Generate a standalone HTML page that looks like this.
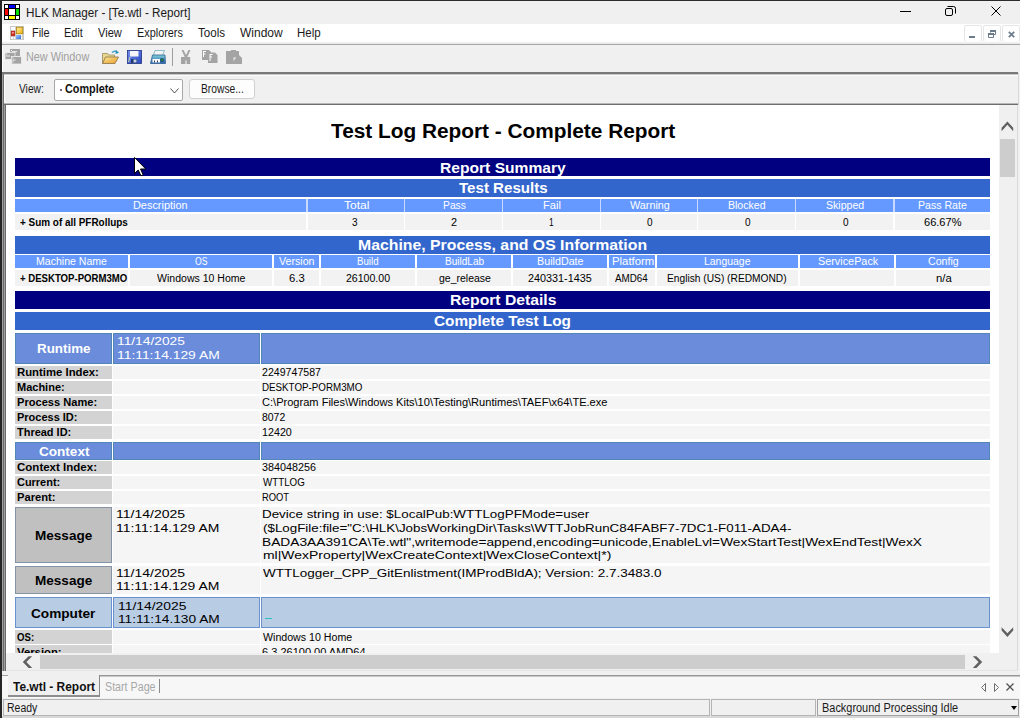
<!DOCTYPE html><html><head><meta charset="utf-8"><style>
*{margin:0;padding:0;box-sizing:border-box}
html,body{width:1020px;height:718px;overflow:hidden;background:#f0f0f0;font-family:"Liberation Sans",sans-serif;position:relative}
.a{position:absolute}
.t{position:absolute;white-space:nowrap;transform-origin:0 0;line-height:1}
</style></head><body>
<div class="a" style="left:0px;top:0px;width:1020px;height:1px;background:#2b2b2b"></div>
<div class="a" style="left:0px;top:1px;width:1020px;height:23px;background:#f0f0f0"></div>
<svg class="a" style="left:4px;top:4px" width="16" height="16" viewBox="0 0 16 16">
<rect x="0" y="0" width="16" height="16" fill="#000"/>
<rect x="1" y="1" width="3" height="3" fill="#fff"/><rect x="5" y="1" width="6" height="3" fill="#0000ff"/><rect x="12" y="1" width="3" height="3" fill="#fff"/>
<rect x="1" y="5" width="3" height="6" fill="#ff0000"/><rect x="5" y="5" width="6" height="6" fill="#fff"/><rect x="12" y="5" width="3" height="6" fill="#00dd00"/>
<rect x="1" y="12" width="3" height="3" fill="#fff"/><rect x="5" y="12" width="6" height="3" fill="#ffff00"/><rect x="12" y="12" width="3" height="3" fill="#fff"/>
</svg>
<span class="t " id="t1" style="left:25.60px;top:7px;font-size:12px;color:#1a1a1a;transform:scaleX(0.9746);">HLK Manager - [Te.wtl - Report]</span>
<div class="a" style="left:900px;top:11px;width:11px;height:1px;background:#000"></div>
<svg class="a" style="left:945px;top:6px" width="11" height="10" viewBox="0 0 11 10"><rect x="0.5" y="2.5" width="7" height="7" rx="1.5" fill="none" stroke="#000"/><path d="M2.5 0.5H8.5Q10.5 0.5 10.5 2.5V7.5" fill="none" stroke="#000"/></svg>
<svg class="a" style="left:991px;top:6px" width="10" height="10" viewBox="0 0 10 10"><path d="M0.5 0.5L9.5 9.5M9.5 0.5L0.5 9.5" stroke="#000" stroke-width="1"/></svg>
<div class="a" style="left:0px;top:24px;width:1020px;height:19px;background:#ffffff"></div>
<svg class="a" style="left:10px;top:26px" width="14" height="14" viewBox="0 0 14 14">
<defs><linearGradient id="og" x1="0" y1="0" x2="1" y2="1"><stop offset="0" stop-color="#fff0b0"/><stop offset="1" stop-color="#f0b000"/></linearGradient>
<linearGradient id="bg2" x1="0" y1="0" x2="1" y2="1"><stop offset="0" stop-color="#a0c8ff"/><stop offset="1" stop-color="#3070e0"/></linearGradient></defs>
<rect x="0.5" y="0.5" width="13" height="13" fill="#fff" stroke="#c8c8c8"/>
<path d="M5.5 0.5V13.5M0.5 4.5H5.5M0.5 10.5H13.5M3.5 10.5V13.5M12.5 8.5V13.5" stroke="#d4d4d4" stroke-width="1" fill="none"/>
<rect x="6.4" y="1.2" width="6.4" height="6.6" fill="url(#og)" stroke="#b08810" stroke-width="0.9"/>
<rect x="1.2" y="5.2" width="3.6" height="4.6" fill="#d02818" stroke="#a01808" stroke-width="0.6"/><rect x="2" y="6" width="1.8" height="1.6" fill="#f0a0a0"/>
<rect x="6" y="9" width="5" height="4" fill="url(#bg2)"/>
</svg>
<span class="t " id="t2" style="left:31.85px;top:27px;font-size:12px;color:#1a1a1a;transform:scaleX(0.9105);">File</span>
<span class="t " id="t3" style="left:63.85px;top:27px;font-size:12px;color:#1a1a1a;transform:scaleX(0.9095);">Edit</span>
<span class="t " id="t4" style="left:97.96px;top:27px;font-size:12px;color:#1a1a1a;transform:scaleX(0.9222);">View</span>
<span class="t " id="t5" style="left:136.62px;top:27px;font-size:12px;color:#1a1a1a;transform:scaleX(0.9059);">Explorers</span>
<span class="t " id="t6" style="left:197.97px;top:27px;font-size:12px;color:#1a1a1a;transform:scaleX(0.9655);">Tools</span>
<span class="t " id="t7" style="left:240.00px;top:27px;font-size:12px;color:#1a1a1a;transform:scaleX(1.0000);">Window</span>
<span class="t " id="t8" style="left:297.00px;top:27px;font-size:12px;color:#1a1a1a;transform:scaleX(0.9600);">Help</span>
<div class="a" style="left:964px;top:25px;width:18px;height:17px;background:#fff;border:1px solid #e6e6e6;border-radius:2px"></div>
<div class="a" style="left:983px;top:25px;width:18px;height:17px;background:#fff;border:1px solid #e6e6e6;border-radius:2px"></div>
<div class="a" style="left:1002px;top:25px;width:18px;height:17px;background:#fff;border:1px solid #e6e6e6;border-radius:2px"></div>
<div class="a" style="left:969px;top:36px;width:6px;height:2px;background:#6b7b8c"></div>
<svg class="a" style="left:988px;top:30px" width="8" height="8" viewBox="0 0 8 8"><path d="M0.5 3.5H5.5V7.5H0.5z" fill="none" stroke="#6b7b8c" stroke-width="1"/><rect x="0" y="3" width="6" height="2" fill="#6b7b8c"/><path d="M2.5 2.5V0.5H7.5V4.5H6" fill="none" stroke="#6b7b8c" stroke-width="1"/><rect x="2" y="0" width="6" height="2" fill="#6b7b8c"/></svg>
<svg class="a" style="left:1008px;top:31px" width="7" height="7" viewBox="0 0 7 7"><path d="M0.8 0.8L6.2 6.2M6.2 0.8L0.8 6.2" stroke="#6b7b8c" stroke-width="1.7"/></svg>
<div class="a" style="left:0px;top:41px;width:1020px;height:3px;background:linear-gradient(#ffffff,#e4e4e4)"></div>
<div class="a" style="left:0px;top:44px;width:1020px;height:1px;background:#a8a8a8"></div>
<div class="a" style="left:0px;top:45px;width:1020px;height:27px;background:#f0f0f0"></div>
<svg class="a" style="left:5px;top:48px" width="17" height="17" viewBox="0 0 17 17">
<rect x="5" y="1" width="10" height="7" fill="#a4a4a4"/>
<rect x="0" y="4.5" width="10" height="7" fill="#a4a4a4" stroke="#f0f0f0" stroke-width="0.8"/>
<rect x="6.5" y="8.5" width="10" height="7.5" fill="#a4a4a4" stroke="#f0f0f0" stroke-width="0.8"/>
<rect x="6" y="2" width="1" height="1" fill="#fff"/><rect x="7" y="3" width="5" height="1" fill="#e8e8e8"/>
<rect x="1" y="5.5" width="1" height="1" fill="#fff"/><rect x="1" y="7.5" width="4" height="1" fill="#e8e8e8"/>
<rect x="7.5" y="9.5" width="1" height="1" fill="#fff"/><rect x="7.5" y="11.5" width="3" height="1" fill="#e8e8e8"/><rect x="7.5" y="12.5" width="1" height="2" fill="#e8e8e8"/>
</svg>
<span class="t " id="t9" style="left:25.50px;top:51px;font-size:12px;color:#a0a0a0;transform:scaleX(0.9029);">New Window</span>
<svg class="a" style="left:102px;top:50px" width="17" height="14" viewBox="0 0 17 14">
<defs><linearGradient id="fg" x1="0" y1="0" x2="1" y2="1"><stop offset="0" stop-color="#f4f0a0"/><stop offset="0.5" stop-color="#f2c060"/><stop offset="1" stop-color="#e8a030"/></linearGradient></defs>
<path d="M0.5 3.5h5l1 1.5h6v2.5H4L0.5 13.5z" fill="#e8d890" stroke="#9a8a60" stroke-width="0.8"/>
<path d="M0.5 13.5L3.5 7h13l-3.5 6.5z" fill="url(#fg)" stroke="#8a7040" stroke-width="0.8"/>
<path d="M10 2.5Q12 0.5 14.5 1.5" fill="none" stroke="#40a0c8" stroke-width="1.5"/><path d="M14 0L17 2.8L13.5 4z" fill="#2890b8"/>
</svg>
<svg class="a" style="left:127px;top:50px" width="15" height="14" viewBox="0 0 15 14">
<defs><linearGradient id="sg" x1="0" y1="0" x2="1" y2="1"><stop offset="0" stop-color="#7890f0"/><stop offset="1" stop-color="#2a48c0"/></linearGradient></defs>
<rect x="0.5" y="0.5" width="14" height="13" fill="url(#sg)" stroke="#203080" stroke-width="0.8"/>
<rect x="3" y="1" width="8.5" height="5.5" fill="#f4f4fa"/>
<rect x="4" y="9" width="6" height="4" fill="#203a70"/><rect x="6.5" y="9.5" width="3" height="3" fill="#c0d0e8"/>
<path d="M1.5 12L3 7" stroke="#e0f0a0" stroke-width="0.8"/>
</svg>
<svg class="a" style="left:150px;top:50px" width="16" height="14" viewBox="0 0 16 14">
<defs><linearGradient id="pg" x1="0" y1="0" x2="0" y2="1"><stop offset="0" stop-color="#80d0d8"/><stop offset="1" stop-color="#2860b0"/></linearGradient></defs>
<path d="M5 0.5h9.5l-2.5 6H3z" fill="#f4f4f4" stroke="#70b0c0" stroke-width="0.8"/>
<path d="M2.5 5h12.5l0.5 8.5H0.5z" fill="url(#pg)" stroke="#306090" stroke-width="0.8"/>
<rect x="2.5" y="9" width="7.5" height="3.5" fill="#fafafa"/><rect x="4" y="10.5" width="1" height="2" fill="#304060"/><rect x="7" y="10.5" width="1" height="2" fill="#304060"/>
<rect x="10.5" y="8.5" width="3" height="3" fill="#102040"/><rect x="11.2" y="9.2" width="1.6" height="1.6" fill="#20c040"/>
</svg>
<div class="a" style="left:172px;top:48px;width:1px;height:18px;background:#a0a0a0"></div>
<svg class="a" style="left:181px;top:50px" width="10" height="14" viewBox="0 0 10 14" fill="#a4a4a4"><path d="M0.5 0H2.5L5 5L7.5 0H9.5L6.3 7H9.2V14H5.6V10.5H4.4V14H0V7H3.7z"/></svg>
<svg class="a" style="left:202px;top:50px" width="16" height="13" viewBox="0 0 16 13"><path d="M0 0H7L9 2V10H0z" fill="#a4a4a4"/><path d="M6 2.5H13L15.5 5V13H6z" fill="#a4a4a4"/>
<path d="M1 1H4V2H2V3.5H3.5V4.5H2V7H1z" fill="#fff"/><path d="M7.5 4H10.5V5H8.5V6.5H10V7.5H8.5V11H7.5z" fill="#fff"/></svg>
<svg class="a" style="left:226px;top:50px" width="16" height="14" viewBox="0 0 16 14" fill="#a4a4a4"><path d="M0 1H13V14H0z"/><path d="M5 0H10V1.5H5z"/><path d="M6 5H13L16 8V14H6z"/>
<path d="M7.5 7.5H10V8.5H8.5V10.5H7.5z" fill="#f4f4f4"/></svg>
<div class="a" style="left:2px;top:45px;width:1px;height:27px;background:#fcfcfc"></div>
<div class="a" style="left:2px;top:72px;width:1016px;height:2px;background:#787878"></div>
<div class="a" style="left:2px;top:74px;width:1px;height:31px;background:#a0a0a0"></div>
<div class="a" style="left:3px;top:74px;width:1px;height:31px;background:#707070"></div>
<div class="a" style="left:4px;top:74px;width:1014px;height:29px;background:#f0f0f0"></div>
<div class="a" style="left:4px;top:74px;width:1014px;height:1px;background:#c8c8c8"></div>
<div class="a" style="left:4px;top:75px;width:1014px;height:1px;background:#fcfcfc"></div>
<div class="a" style="left:4px;top:75px;width:1px;height:28px;background:#fcfcfc"></div>
<span class="t " id="t10" style="left:18.65px;top:83px;font-size:12px;color:#1a1a1a;transform:scaleX(0.8500);">View:</span>
<div class="a" style="left:54px;top:79px;width:129px;height:22px;background:#fff;border:1px solid #a8a8a8;border-radius:2px"></div>
<div class="a" style="left:60px;top:89px;width:2px;height:2px;background:#806080"></div>
<span class="t " id="t11" style="left:65.00px;top:83px;font-size:12px;color:#111;transform:scaleX(0.9036);font-weight:bold;">Complete</span>
<svg class="a" style="left:170px;top:88px" width="9" height="6" viewBox="0 0 9 6"><path d="M0.5 0.5L4.5 5L8.5 0.5" fill="none" stroke="#505050" stroke-width="1"/></svg>
<div class="a" style="left:189px;top:79px;width:66px;height:20px;background:#fdfdfd;border:1px solid #d0d0d0;border-radius:3px"></div>
<span class="t " id="t12" style="left:200.60px;top:83px;font-size:12px;color:#1a1a1a;transform:scaleX(0.8560);">Browse...</span>
<div class="a" style="left:4px;top:103px;width:1014px;height:1px;background:#b8b8b8"></div>
<div class="a" style="left:4px;top:104px;width:1014px;height:1px;background:#6e6e6e"></div>
<div class="a" style="left:1018px;top:73px;width:1px;height:32px;background:#d8d8d8"></div>
<div class="a" style="left:0px;top:105px;width:1020px;height:570px;background:#f0f0f0"></div>
<div class="a" style="left:2px;top:105px;width:1px;height:566px;background:#a0a0a0"></div>
<div class="a" style="left:3px;top:105px;width:1px;height:566px;background:#6a6a6a"></div>
<div class="a" style="left:4px;top:105px;width:1px;height:566px;background:#a0a0a0"></div>
<div class="a" style="left:5px;top:105px;width:1px;height:566px;background:#6a6a6a"></div>
<div class="a" style="left:6px;top:105px;width:993px;height:548px;background:#fff"></div>
<div class="a" style="left:0;top:0;width:999px;height:653px;overflow:hidden">
<span class="t " id="t13" style="left:331.04px;top:121px;font-size:20px;color:#000;transform:scaleX(1.0407);font-weight:bold;">Test Log Report - Complete Report</span>
<div class="a" style="left:15px;top:158px;width:975px;height:18px;background:#000080"></div>
<span class="t " id="t14" style="left:439.59px;top:160px;font-size:15px;color:#fff;transform:scaleX(1.0405);font-weight:bold;">Report Summary</span>
<div class="a" style="left:15px;top:179px;width:975px;height:18px;background:#3366cc"></div>
<span class="t " id="t15" style="left:458.80px;top:180px;font-size:15px;color:#fff;transform:scaleX(1.0067);font-weight:bold;">Test Results</span>
<div class="a" style="left:15px;top:199px;width:291px;height:13px;background:#6699ff"></div>
<div class="a" style="left:15px;top:214px;width:291px;height:16px;background:#f2f2f2"></div>
<div class="a" style="left:308px;top:199px;width:96px;height:13px;background:#6699ff"></div>
<div class="a" style="left:308px;top:214px;width:96px;height:16px;background:#f2f2f2"></div>
<div class="a" style="left:405px;top:199px;width:97px;height:13px;background:#6699ff"></div>
<div class="a" style="left:405px;top:214px;width:97px;height:16px;background:#f2f2f2"></div>
<div class="a" style="left:503px;top:199px;width:97px;height:13px;background:#6699ff"></div>
<div class="a" style="left:503px;top:214px;width:97px;height:16px;background:#f2f2f2"></div>
<div class="a" style="left:601px;top:199px;width:96px;height:13px;background:#6699ff"></div>
<div class="a" style="left:601px;top:214px;width:96px;height:16px;background:#f2f2f2"></div>
<div class="a" style="left:698px;top:199px;width:97px;height:13px;background:#6699ff"></div>
<div class="a" style="left:698px;top:214px;width:97px;height:16px;background:#f2f2f2"></div>
<div class="a" style="left:796px;top:199px;width:97px;height:13px;background:#6699ff"></div>
<div class="a" style="left:796px;top:214px;width:97px;height:16px;background:#f2f2f2"></div>
<div class="a" style="left:895px;top:199px;width:95px;height:13px;background:#6699ff"></div>
<div class="a" style="left:895px;top:214px;width:95px;height:16px;background:#f2f2f2"></div>
<div class="a" style="left:306px;top:199px;width:2px;height:13px;background:#c8d8ff"></div>
<div class="a" style="left:404px;top:199px;width:1px;height:13px;background:#c8d8ff"></div>
<div class="a" style="left:502px;top:199px;width:1px;height:13px;background:#c8d8ff"></div>
<div class="a" style="left:600px;top:199px;width:1px;height:13px;background:#c8d8ff"></div>
<div class="a" style="left:697px;top:199px;width:1px;height:13px;background:#c8d8ff"></div>
<div class="a" style="left:795px;top:199px;width:1px;height:13px;background:#c8d8ff"></div>
<div class="a" style="left:893px;top:199px;width:2px;height:13px;background:#c8d8ff"></div>
<span class="t " id="t16" style="left:132.96px;top:201px;font-size:10px;color:#fff;transform:scaleX(1.0900);">Description</span>
<span class="t " id="t17" style="left:19.80px;top:218px;font-size:10px;color:#000;transform:scaleX(0.9927);font-weight:bold;">+ Sum of all PFRollups</span>
<span class="t " id="t18" style="left:344.00px;top:201px;font-size:10px;color:#fff;transform:scaleX(1.2048);">Total</span>
<span class="t " id="t19" style="left:352.00px;top:218px;font-size:10px;color:#000;transform:scaleX(1.0000);">3</span>
<span class="t " id="t20" style="left:442.80px;top:201px;font-size:10px;color:#fff;transform:scaleX(1.0318);">Pass</span>
<span class="t " id="t21" style="left:451.00px;top:218px;font-size:10px;color:#000;transform:scaleX(1.0833);">2</span>
<span class="t " id="t22" style="left:543.00px;top:201px;font-size:10px;color:#fff;transform:scaleX(1.1125);">Fail</span>
<span class="t " id="t23" style="left:549.00px;top:218px;font-size:10px;color:#000;transform:scaleX(0.8333);">1</span>
<span class="t " id="t24" style="left:629.83px;top:201px;font-size:10px;color:#fff;transform:scaleX(1.0811);">Warning</span>
<span class="t " id="t25" style="left:647.00px;top:218px;font-size:10px;color:#000;transform:scaleX(1.0000);">0</span>
<span class="t " id="t26" style="left:728.18px;top:201px;font-size:10px;color:#fff;transform:scaleX(1.0543);">Blocked</span>
<span class="t " id="t27" style="left:745.00px;top:218px;font-size:10px;color:#000;transform:scaleX(1.0000);">0</span>
<span class="t " id="t28" style="left:826.00px;top:201px;font-size:10px;color:#fff;transform:scaleX(1.0556);">Skipped</span>
<span class="t " id="t29" style="left:843.00px;top:218px;font-size:10px;color:#000;transform:scaleX(1.0000);">0</span>
<span class="t " id="t30" style="left:918.00px;top:201px;font-size:10px;color:#fff;transform:scaleX(1.0587);">Pass Rate</span>
<span class="t " id="t31" style="left:924.00px;top:218px;font-size:10px;color:#000;transform:scaleX(1.1059);">66.67%</span>
<div class="a" style="left:15px;top:236px;width:975px;height:18px;background:#3366cc"></div>
<span class="t " id="t32" style="left:357.97px;top:237px;font-size:15px;color:#fff;transform:scaleX(1.0540);font-weight:bold;">Machine, Process, and OS Information</span>
<div class="a" style="left:15px;top:255px;width:113px;height:13px;background:#6699ff"></div>
<div class="a" style="left:15px;top:270px;width:113px;height:16px;background:#f2f2f2"></div>
<div class="a" style="left:130px;top:255px;width:142px;height:13px;background:#6699ff"></div>
<div class="a" style="left:130px;top:270px;width:142px;height:16px;background:#f2f2f2"></div>
<div class="a" style="left:274px;top:255px;width:45px;height:13px;background:#6699ff"></div>
<div class="a" style="left:274px;top:270px;width:45px;height:16px;background:#f2f2f2"></div>
<div class="a" style="left:321px;top:255px;width:94px;height:13px;background:#6699ff"></div>
<div class="a" style="left:321px;top:270px;width:94px;height:16px;background:#f2f2f2"></div>
<div class="a" style="left:417px;top:255px;width:94px;height:13px;background:#6699ff"></div>
<div class="a" style="left:417px;top:270px;width:94px;height:16px;background:#f2f2f2"></div>
<div class="a" style="left:513px;top:255px;width:94px;height:13px;background:#6699ff"></div>
<div class="a" style="left:513px;top:270px;width:94px;height:16px;background:#f2f2f2"></div>
<div class="a" style="left:609px;top:255px;width:46px;height:13px;background:#6699ff"></div>
<div class="a" style="left:609px;top:270px;width:46px;height:16px;background:#f2f2f2"></div>
<div class="a" style="left:657px;top:255px;width:141px;height:13px;background:#6699ff"></div>
<div class="a" style="left:657px;top:270px;width:141px;height:16px;background:#f2f2f2"></div>
<div class="a" style="left:800px;top:255px;width:94px;height:13px;background:#6699ff"></div>
<div class="a" style="left:800px;top:270px;width:94px;height:16px;background:#f2f2f2"></div>
<div class="a" style="left:896px;top:255px;width:94px;height:13px;background:#6699ff"></div>
<div class="a" style="left:896px;top:270px;width:94px;height:16px;background:#f2f2f2"></div>
<span class="t " id="t33" style="left:36.00px;top:257px;font-size:10px;color:#fff;transform:scaleX(1.0544);">Machine Name</span>
<span class="t " id="t34" style="left:20.00px;top:274px;font-size:10px;color:#000;transform:scaleX(0.9589);font-weight:bold;">+ DESKTOP-PORM3MO</span>
<span class="t " id="t35" style="left:195.44px;top:257px;font-size:10px;color:#fff;transform:scaleX(0.8643);">OS</span>
<span class="t " id="t36" style="left:157.44px;top:274px;font-size:10px;color:#000;transform:scaleX(1.0541);">Windows 10 Home</span>
<span class="t " id="t37" style="left:279.03px;top:257px;font-size:10px;color:#fff;transform:scaleX(1.0647);">Version</span>
<span class="t " id="t38" style="left:289.06px;top:274px;font-size:10px;color:#000;transform:scaleX(1.1267);">6.3</span>
<span class="t " id="t39" style="left:357.41px;top:257px;font-size:10px;color:#fff;transform:scaleX(0.9682);">Build</span>
<span class="t " id="t40" style="left:346.23px;top:274px;font-size:10px;color:#000;transform:scaleX(1.0558);">26100.00</span>
<span class="t " id="t41" style="left:444.60px;top:257px;font-size:10px;color:#fff;transform:scaleX(1.0051);">BuildLab</span>
<span class="t " id="t42" style="left:439.23px;top:274px;font-size:10px;color:#000;transform:scaleX(1.0480);">ge_release</span>
<span class="t " id="t43" style="left:536.96px;top:257px;font-size:10px;color:#fff;transform:scaleX(1.0744);">BuildDate</span>
<span class="t " id="t44" style="left:528.25px;top:274px;font-size:10px;color:#000;transform:scaleX(1.0800);">240331-1435</span>
<span class="t " id="t45" style="left:612.00px;top:257px;font-size:10px;color:#fff;transform:scaleX(1.1351);">Platform</span>
<span class="t " id="t46" style="left:615.39px;top:274px;font-size:10px;color:#000;transform:scaleX(0.9800);">AMD64</span>
<span class="t " id="t47" style="left:704.00px;top:257px;font-size:10px;color:#fff;transform:scaleX(1.0444);">Language</span>
<span class="t " id="t48" style="left:667.19px;top:274px;font-size:10px;color:#000;transform:scaleX(1.0205);">English (US) (REDMOND)</span>
<span class="t " id="t49" style="left:817.58px;top:257px;font-size:10px;color:#fff;transform:scaleX(1.0839);">ServicePack</span>
<span class="t " id="t50" style="left:928.00px;top:257px;font-size:10px;color:#fff;transform:scaleX(1.0621);">Config</span>
<span class="t " id="t51" style="left:935.57px;top:274px;font-size:10px;color:#000;transform:scaleX(1.1286);">n/a</span>
<div class="a" style="left:15px;top:291px;width:975px;height:18px;background:#000080"></div>
<span class="t " id="t52" style="left:449.57px;top:292px;font-size:15px;color:#fff;transform:scaleX(1.0465);font-weight:bold;">Report Details</span>
<div class="a" style="left:15px;top:312px;width:975px;height:18px;background:#3366cc"></div>
<span class="t " id="t53" style="left:434.40px;top:313px;font-size:15px;color:#fff;transform:scaleX(1.0231);font-weight:bold;">Complete Test Log</span>
<div class="a" style="left:15px;top:333px;width:97px;height:31px;background:#6a8cdb;border:1px solid #5286b6"></div>
<div class="a" style="left:113px;top:333px;width:147px;height:31px;background:#6a8cdb;border:1px solid #5286b6"></div>
<div class="a" style="left:261px;top:333px;width:729px;height:31px;background:#6a8cdb;border:1px solid #5286b6"></div>
<span class="t " id="t54" style="left:36.99px;top:342px;font-size:13px;color:#fff;transform:scaleX(1.0288);font-weight:bold;">Runtime</span>
<span class="t " id="t55" style="left:117.42px;top:336px;font-size:11px;color:#fff;transform:scaleX(1.2519);">11/14/2025</span>
<span class="t " id="t56" style="left:117.42px;top:350px;font-size:11px;color:#fff;transform:scaleX(1.2593);">11:11:14.129 AM</span>
<div class="a" style="left:15px;top:366px;width:97px;height:13px;background:#d3d3d3"></div>
<div class="a" style="left:113px;top:366px;width:147px;height:13px;background:#f5f5f5"></div>
<div class="a" style="left:261px;top:366px;width:729px;height:13px;background:#f5f5f5"></div>
<span class="t " id="t57" style="left:16.85px;top:368px;font-size:10px;color:#000;transform:scaleX(1.1333);font-weight:bold;">Runtime Index:</span>
<span class="t " id="t58" style="left:262.00px;top:368px;font-size:10px;color:#000;transform:scaleX(1.0607);">2249747587</span>
<div class="a" style="left:15px;top:381px;width:97px;height:13px;background:#d3d3d3"></div>
<div class="a" style="left:113px;top:381px;width:147px;height:13px;background:#f5f5f5"></div>
<div class="a" style="left:261px;top:381px;width:729px;height:13px;background:#f5f5f5"></div>
<span class="t " id="t59" style="left:16.84px;top:383px;font-size:10px;color:#000;transform:scaleX(1.1000);font-weight:bold;">Machine:</span>
<span class="t " id="t60" style="left:262.00px;top:383px;font-size:10px;color:#000;transform:scaleX(0.9777);">DESKTOP-PORM3MO</span>
<div class="a" style="left:15px;top:396px;width:97px;height:13px;background:#d3d3d3"></div>
<div class="a" style="left:113px;top:396px;width:147px;height:13px;background:#f5f5f5"></div>
<div class="a" style="left:261px;top:396px;width:729px;height:13px;background:#f5f5f5"></div>
<span class="t " id="t61" style="left:16.84px;top:398px;font-size:10px;color:#000;transform:scaleX(1.1083);font-weight:bold;">Process Name:</span>
<span class="t " id="t62" style="left:262.00px;top:398px;font-size:10px;color:#000;transform:scaleX(1.1067);">C:\Program Files\Windows Kits\10\Testing\Runtimes\TAEF\x64\TE.exe</span>
<div class="a" style="left:15px;top:411px;width:97px;height:13px;background:#d3d3d3"></div>
<div class="a" style="left:113px;top:411px;width:147px;height:13px;background:#f5f5f5"></div>
<div class="a" style="left:261px;top:411px;width:729px;height:13px;background:#f5f5f5"></div>
<span class="t " id="t63" style="left:16.84px;top:413px;font-size:10px;color:#000;transform:scaleX(1.0982);font-weight:bold;">Process ID:</span>
<span class="t " id="t64" style="left:262.00px;top:413px;font-size:10px;color:#000;transform:scaleX(1.0435);">8072</span>
<div class="a" style="left:15px;top:426px;width:97px;height:13px;background:#d3d3d3"></div>
<div class="a" style="left:113px;top:426px;width:147px;height:13px;background:#f5f5f5"></div>
<div class="a" style="left:261px;top:426px;width:729px;height:13px;background:#f5f5f5"></div>
<span class="t " id="t65" style="left:16.84px;top:428px;font-size:10px;color:#000;transform:scaleX(1.0960);font-weight:bold;">Thread ID:</span>
<span class="t " id="t66" style="left:262.00px;top:428px;font-size:10px;color:#000;transform:scaleX(1.0714);">12420</span>
<div class="a" style="left:15px;top:442px;width:97px;height:18px;background:#6a8cdb;border:1px solid #5286b6"></div>
<div class="a" style="left:113px;top:442px;width:147px;height:18px;background:#6a8cdb;border:1px solid #5286b6"></div>
<div class="a" style="left:261px;top:442px;width:729px;height:18px;background:#6a8cdb;border:1px solid #5286b6"></div>
<span class="t " id="t67" style="left:38.80px;top:445px;font-size:13px;color:#fff;transform:scaleX(1.0429);font-weight:bold;">Context</span>
<div class="a" style="left:15px;top:461px;width:97px;height:13px;background:#d3d3d3"></div>
<div class="a" style="left:113px;top:461px;width:147px;height:13px;background:#f5f5f5"></div>
<div class="a" style="left:261px;top:461px;width:729px;height:13px;background:#f5f5f5"></div>
<span class="t " id="t68" style="left:16.86px;top:463px;font-size:10px;color:#000;transform:scaleX(1.1514);font-weight:bold;">Context Index:</span>
<span class="t " id="t69" style="left:262.00px;top:463px;font-size:10px;color:#000;transform:scaleX(1.0780);">384048256</span>
<div class="a" style="left:15px;top:476px;width:97px;height:13px;background:#d3d3d3"></div>
<div class="a" style="left:113px;top:476px;width:147px;height:13px;background:#f5f5f5"></div>
<div class="a" style="left:261px;top:476px;width:729px;height:13px;background:#f5f5f5"></div>
<span class="t " id="t70" style="left:16.84px;top:478px;font-size:10px;color:#000;transform:scaleX(1.0950);font-weight:bold;">Current:</span>
<span class="t " id="t71" style="left:262.98px;top:478px;font-size:10px;color:#000;transform:scaleX(0.9773);">WTTLOG</span>
<div class="a" style="left:15px;top:491px;width:97px;height:13px;background:#d3d3d3"></div>
<div class="a" style="left:113px;top:491px;width:147px;height:13px;background:#f5f5f5"></div>
<div class="a" style="left:261px;top:491px;width:729px;height:13px;background:#f5f5f5"></div>
<span class="t " id="t72" style="left:16.85px;top:493px;font-size:10px;color:#000;transform:scaleX(1.1171);font-weight:bold;">Parent:</span>
<span class="t " id="t73" style="left:262.00px;top:493px;font-size:10px;color:#000;transform:scaleX(0.9379);">ROOT</span>
<div class="a" style="left:15px;top:507px;width:97px;height:56px;background:#c0c0c0;border:1px solid #8494a4"></div>
<div class="a" style="left:113px;top:507px;width:147px;height:56px;background:#f5f5f5"></div>
<div class="a" style="left:261px;top:507px;width:729px;height:56px;background:#f5f5f5"></div>
<span class="t " id="t74" style="left:34.98px;top:529px;font-size:13px;color:#000;transform:scaleX(1.0418);font-weight:bold;">Message</span>
<span class="t " id="t75" style="left:115.55px;top:509px;font-size:11px;color:#000;transform:scaleX(1.2741);">11/14/2025</span>
<span class="t " id="t76" style="left:115.55px;top:523px;font-size:11px;color:#000;transform:scaleX(1.2679);">11:11:14.129 AM</span>
<span class="t " id="t77" style="left:261.67px;top:509px;font-size:11px;color:#000;transform:scaleX(1.2178);">Device string in use: $LocalPub:WTTLogPFMode=user</span>
<span class="t " id="t78" style="left:262.89px;top:523px;font-size:11px;color:#000;transform:scaleX(1.2152);">($LogFile:file="C:\HLK\JobsWorkingDir\Tasks\WTTJobRunC84FABF7-7DC1-F011-ADA4-</span>
<span class="t " id="t79" style="left:261.65px;top:537px;font-size:11px;color:#000;transform:scaleX(1.2489);">BADA3AA391CA\Te.wtl",writemode=append,encoding=unicode,EnableLvl=WexStartTest|WexEndTest|WexX</span>
<span class="t " id="t80" style="left:262.91px;top:550px;font-size:11px;color:#000;transform:scaleX(1.2669);">ml|WexProperty|WexCreateContext|WexCloseContext|*)</span>
<div class="a" style="left:15px;top:566px;width:97px;height:28px;background:#c0c0c0;border:1px solid #8494a4"></div>
<div class="a" style="left:113px;top:566px;width:147px;height:28px;background:#f5f5f5"></div>
<div class="a" style="left:261px;top:566px;width:729px;height:28px;background:#f5f5f5"></div>
<span class="t " id="t81" style="left:34.98px;top:574px;font-size:13px;color:#000;transform:scaleX(1.0418);font-weight:bold;">Message</span>
<span class="t " id="t82" style="left:115.55px;top:568px;font-size:11px;color:#000;transform:scaleX(1.2741);">11/14/2025</span>
<span class="t " id="t83" style="left:115.55px;top:581px;font-size:11px;color:#000;transform:scaleX(1.2679);">11:11:14.129 AM</span>
<span class="t " id="t84" style="left:262.89px;top:568px;font-size:11px;color:#000;transform:scaleX(1.2252);">WTTLogger_CPP_GitEnlistment(IMProdBldA); Version: 2.7.3483.0</span>
<div class="a" style="left:15px;top:597px;width:97px;height:31px;background:#b8cce4;border:1px solid #6a90d0"></div>
<div class="a" style="left:113px;top:597px;width:147px;height:31px;background:#b8cce4;border:1px solid #6a90d0"></div>
<div class="a" style="left:261px;top:597px;width:729px;height:31px;background:#b8cce4;border:1px solid #6a90d0"></div>
<span class="t " id="t85" style="left:31.39px;top:607px;font-size:13px;color:#000;transform:scaleX(1.0484);font-weight:bold;">Computer</span>
<span class="t " id="t86" style="left:117.77px;top:601px;font-size:11px;color:#000;transform:scaleX(1.2611);">11/14/2025</span>
<span class="t " id="t87" style="left:117.78px;top:614px;font-size:11px;color:#000;transform:scaleX(1.2481);">11:11:14.130 AM</span>
<div class="a" style="left:265px;top:618px;width:7px;height:1px;background:#30c0c0"></div>
<div class="a" style="left:15px;top:630px;width:97px;height:14px;background:#d3d3d3"></div>
<div class="a" style="left:113px;top:630px;width:147px;height:14px;background:#f5f5f5"></div>
<div class="a" style="left:261px;top:630px;width:729px;height:14px;background:#f5f5f5"></div>
<span class="t " id="t88" style="left:16.78px;top:633px;font-size:10px;color:#000;transform:scaleX(0.9611);font-weight:bold;">OS:</span>
<span class="t " id="t89" style="left:263.06px;top:633px;font-size:10px;color:#000;transform:scaleX(1.0624);">Windows 10 Home</span>
<div class="a" style="left:15px;top:645px;width:97px;height:14px;background:#d3d3d3"></div>
<div class="a" style="left:113px;top:645px;width:147px;height:14px;background:#f5f5f5"></div>
<div class="a" style="left:261px;top:645px;width:729px;height:14px;background:#f5f5f5"></div>
<span class="t " id="t90" style="left:16.85px;top:648px;font-size:10px;color:#000;transform:scaleX(1.1300);font-weight:bold;">Version:</span>
<span class="t " id="t91" style="left:262.00px;top:648px;font-size:10px;color:#000;transform:scaleX(1.1021);">6.3.26100.00 AMD64</span>
<svg class="a" style="left:133px;top:156px" width="14" height="21" viewBox="0 0 14 21"><path d="M1.5 1.5V17.5L5.2 14L8 19.8L10.2 18.8L7.5 13H12.8z" fill="#fff" stroke="#000" stroke-width="1" stroke-linejoin="miter"/></svg>
</div>
<div class="a" style="left:999px;top:105px;width:18px;height:565px;background:#f0f0f0"></div>
<svg class="a" style="left:1001px;top:121px" width="13" height="11" viewBox="0 0 13 11"><path d="M0.6 6.8L6.4 0.6L12.2 6.8V10.2L6.4 3.8L0.6 10.2z" fill="#606060"/></svg>
<div class="a" style="left:1000px;top:139px;width:15px;height:38px;background:#cdcdcd"></div>
<svg class="a" style="left:1001px;top:627px" width="13" height="11" viewBox="0 0 13 11"><path d="M0.6 0.3L6.4 6.3L12.2 0.3V3.6L6.4 9.9L0.6 3.6z" fill="#606060"/></svg>
<div class="a" style="left:6px;top:653px;width:1011px;height:17px;background:#f0f0f0"></div>
<div class="a" style="left:40px;top:655px;width:925px;height:14px;background:#cdcdcd"></div>
<svg class="a" style="left:22px;top:656px" width="11" height="13" viewBox="0 0 11 13"><path d="M10.2 0.3H6.6L0.8 6.1L6.6 11.9H10.2L4.4 6.1z" fill="#606060"/></svg>
<svg class="a" style="left:972px;top:656px" width="11" height="13" viewBox="0 0 11 13"><path d="M0.8 0.3H4.4L10.2 6.1L4.4 11.9H0.8L6.6 6.1z" fill="#606060"/></svg>
<div class="a" style="left:1017px;top:105px;width:1px;height:566px;background:#dcdcdc"></div>
<div class="a" style="left:6px;top:670px;width:1012px;height:1px;background:#e4e4e4"></div>
<div class="a" style="left:0px;top:671px;width:1020px;height:4px;background:#f0f0f0"></div>
<div class="a" style="left:0px;top:675px;width:1020px;height:23px;background:#f7f7f7"></div>
<div class="a" style="left:2px;top:675px;width:6px;height:1px;background:#a0a0a0"></div>
<div class="a" style="left:100px;top:675px;width:920px;height:1px;background:#989898"></div>
<div class="a" style="left:100px;top:676px;width:920px;height:1px;background:#c8c8c8"></div>
<div class="a" style="left:8px;top:675px;width:92px;height:22px;background:#f0f0f0;border-bottom:2px solid #8e8e8e;border-right:1px solid #8a8a8a"></div>
<span class="t " id="t92" style="left:13.00px;top:681px;font-size:12px;color:#111;transform:scaleX(0.9952);font-weight:bold;">Te.wtl - Report</span>
<span class="t " id="t93" style="left:105.00px;top:681px;font-size:12px;color:#a8a8a8;transform:scaleX(0.8912);">Start Page</span>
<div class="a" style="left:159px;top:679px;width:1px;height:14px;background:#8a8a8a"></div>
<svg class="a" style="left:980px;top:683px" width="36" height="9" viewBox="0 0 36 9"><path d="M5.5 0.5L1.5 4.5L5.5 8.5z" fill="none" stroke="#707070"/><path d="M14.5 0.5L18.5 4.5L14.5 8.5z" fill="none" stroke="#707070"/><path d="M26.5 0.5L33.5 7.5M33.5 0.5L26.5 7.5" stroke="#505050" stroke-width="1.25"/></svg>
<div class="a" style="left:0px;top:698px;width:1020px;height:20px;background:#f0f0f0"></div>
<div class="a" style="left:3px;top:699px;width:707px;height:17px;border:1px solid #b4b4b4"></div>
<span class="t " id="t94" style="left:7.40px;top:702px;font-size:12px;color:#1a1a1a;transform:scaleX(0.8743);">Ready</span>
<div class="a" style="left:711px;top:699px;width:105px;height:17px;border:1px solid #b4b4b4"></div>
<div class="a" style="left:817px;top:699px;width:202px;height:17px;border:1px solid #a0a0a0;background:#f0f0f0"></div>
<span class="t " id="t95" style="left:822.00px;top:702px;font-size:12px;color:#1a1a1a;transform:scaleX(0.9113);">Background Processing Idle</span>
<svg class="a" style="left:1011px;top:706px" width="6" height="4" viewBox="0 0 6 4"><path d="M0 0H6L3 4z" fill="#000"/></svg>
<div class="a" style="left:0px;top:716px;width:1020px;height:2px;background:#d8d8d8"></div>
<div class="a" style="left:0px;top:0px;width:2px;height:718px;background:#262626"></div>
</body></html>
